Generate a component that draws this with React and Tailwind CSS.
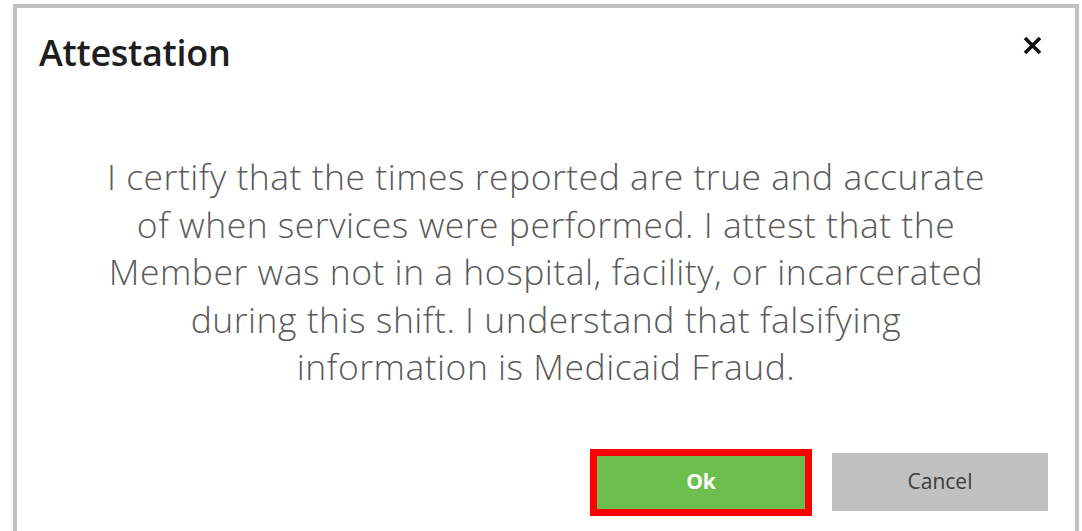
import React from 'react';

const lines = [
  'I certify that the times reported are true and accurate',
  'of when services were performed. I attest that the',
  'Member was not in a hospital, facility, or incarcerated',
  'during this shift. I understand that falsifying',
  'information is Medicaid Fraud.',
];

const CloseIcon = () => (
  <svg width="21" height="19" viewBox="0 0 21 19" fill="none">
    <path d="M3 2 L18 17 M18 2 L3 17" stroke="#111" strokeWidth="3.6" strokeLinecap="butt" />
  </svg>
);

export default function App() {
  return (
    <div className="w-[1082px] h-[531px] overflow-hidden bg-white pl-[13px] pt-[4px] font-['Open_Sans',sans-serif]">
      <div className="w-[1066px] h-[560px] border-4 border-b-0 border-[#c2c2c2] bg-white flex flex-col">
        {/* header */}
        <div className="flex items-start justify-between pl-[22px] pr-[32px] pt-[22px]">
          <h2 className="text-[36px] leading-[46px] font-semibold text-[#1e1e1e] tracking-[-0.3px]">Attestation</h2>
          <button className="mt-[6px]">
            <CloseIcon />
          </button>
        </div>

        {/* body */}
        <div className="mt-[77px] flex flex-col items-center text-[35.5px] leading-[47.5px] font-light tracking-[0.5px] text-[#5a5a5a]">
          {lines.map((l) => (
            <p key={l}>{l}</p>
          ))}
        </div>

        {/* footer */}
        <div className="mt-[58px] flex items-center justify-end gap-[20px] pr-[27px]">
          <button className="w-[222px] h-[67px] border-[7px] border-[#ff0000] bg-[#6cbf4c] text-white text-[21px] font-bold">
            Ok
          </button>
          <button className="w-[216px] h-[58px] bg-[#c1c1c1] text-[#3c3c3c] text-[21px]">
            Cancel
          </button>
        </div>
      </div>
    </div>
  );
}
